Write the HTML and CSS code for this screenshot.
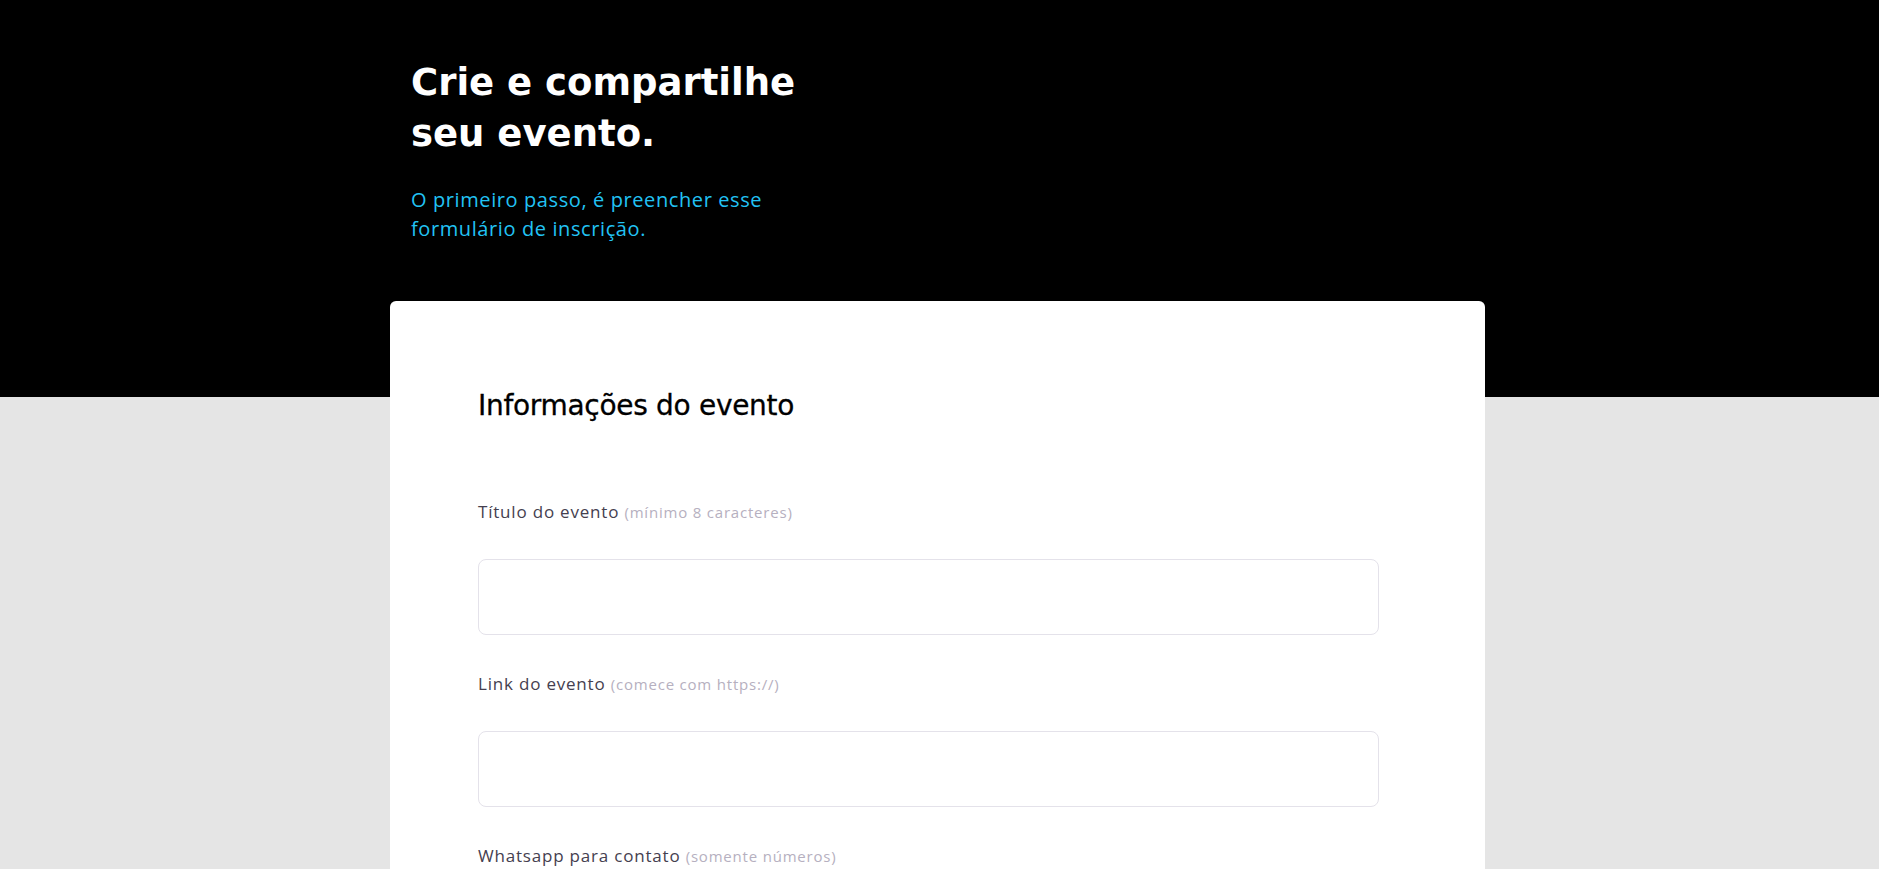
FILE: index.html
```html
<!DOCTYPE html>
<html lang="pt-BR">
<head>
<meta charset="utf-8">
<title>Crie e compartilhe seu evento</title>
<link rel="stylesheet" href="styles.css">
</head>
<body>
<div class="page">
  <header class="hero">
    <h1 class="hero-title">Crie e compartilhe seu evento.</h1>
    <p class="hero-sub">O primeiro passo, é preencher esse formulário de inscrição.</p>
  </header>
  <main class="card">
    <h2 class="card-title">Informações do evento</h2>
    <form class="form">
      <div class="field">
        <label class="label" for="titulo">Título do evento <span class="hint">(mínimo 8 caracteres)</span></label>
        <input class="input" id="titulo" type="text">
      </div>
      <div class="field">
        <label class="label" for="link">Link do evento <span class="hint">(comece com https://)</span></label>
        <input class="input" id="link" type="text">
      </div>
      <div class="field">
        <label class="label" for="whats">Whatsapp para contato <span class="hint">(somente números)</span></label>
        <input class="input" id="whats" type="text">
      </div>
    </form>
  </main>
</div>
</body>
</html>
```
FILE: styles.css
```css
* { box-sizing: border-box; }
html, body { margin: 0; padding: 0; }
body {
  background: linear-gradient(#000 0, #000 397px, #e5e5e5 397px, #e5e5e5 100%);
  background-color: #e5e5e5;
  min-height: 100vh;
  font-family: "Open Sans", "Liberation Sans", sans-serif;
}
.page {
  width: 1095px;
  margin-left: 390px;
}
.hero {
  padding: 57px 0 0 21px;
  height: 301px;
}
.hero-title {
  margin: 0;
  max-width: 400px;
  font-family: "DejaVu Sans", "Liberation Sans", sans-serif;
  font-weight: 700;
  font-size: 37px;
  line-height: 51px;
  color: #fff;
  letter-spacing: 0;
}
.hero-sub {
  margin: 26px 0 0;
  max-width: 400px;
  font-size: 20px;
  line-height: 29px;
  letter-spacing: 0.6px;
  color: #22c3f4;
}
.card {
  background: #fff;
  border-radius: 6px;
  padding: 88px 88px 88px;
  min-height: 600px;
}
.card-title {
  margin: 0;
  font-family: "DejaVu Sans", "Liberation Sans", sans-serif;
  font-weight: 400;
  font-size: 28px;
  line-height: 34px;
  letter-spacing: -0.3px;
  color: #000;
  -webkit-text-stroke: 0.3px #000;
}
.form {
  max-width: 901px;
  margin-top: 77px;
  display: flex;
  flex-direction: column;
  gap: 37px;
}
.field {
  display: flex;
  flex-direction: column;
  gap: 35px;
}
.label {
  font-size: 17px;
  line-height: 24px;
  letter-spacing: 0.8px;
  color: #45404f;
}
.hint {
  font-size: 15px;
  letter-spacing: 0.8px;
  color: #b6b0c0;
}
.input {
  height: 76px;
  width: 100%;
  border: 1px solid #e4e2ea;
  border-radius: 8px;
  background: #fff;
  font: inherit;
  padding: 0 20px;
  outline: none;
}
```
